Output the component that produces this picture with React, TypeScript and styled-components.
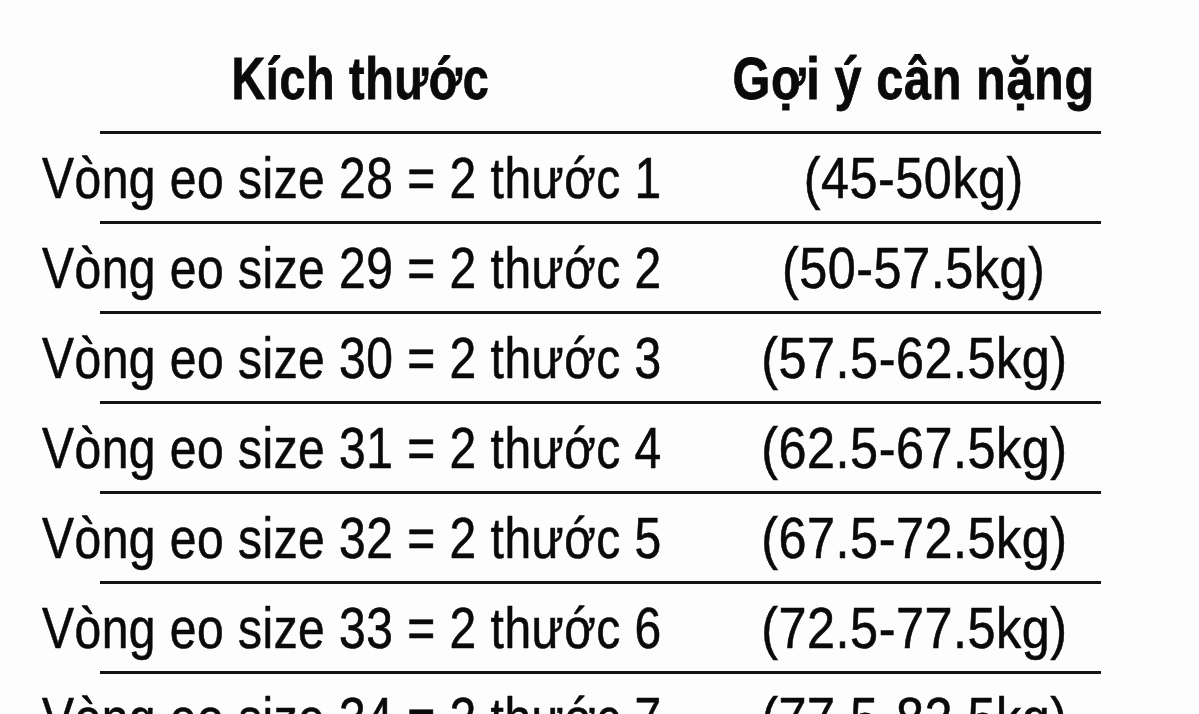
import React from "react";
import styled, { createGlobalStyle } from "styled-components";

const GlobalStyle = createGlobalStyle`
  html, body {
    margin: 0;
    padding: 0;
    background: #fdfdfd;
    overflow: hidden;
  }
  body {
    font-family: "Liberation Sans", Arial, sans-serif;
    color: #0a0a0a;
  }
`;

const Page = styled.div`
  width: 1199px;
  height: 714px;
  overflow: hidden;
  display: flex;
  flex-direction: column;
`;

const Row = styled.div<{ $header?: boolean }>`
  display: grid;
  grid-template-columns: 636px 472px;
  padding-left: 42px;
  height: ${(p) => (p.$header ? "131px" : "87px")};
  box-sizing: border-box;
  padding-top: ${(p) => (p.$header ? "49px" : "0")};
  flex-shrink: 0;
`;

const HeadCell = styled.div`
  font-family: "Liberation Sans", Arial, sans-serif;
  font-weight: 700;
  font-size: 60px;
  line-height: 60px;
  text-align: center;
  white-space: nowrap;
  letter-spacing: 0.8px;
  -webkit-text-stroke: 0.8px #0a0a0a;
`;

const Cell = styled.div<{ $align: "left" | "center" }>`
  font-family: "Liberation Sans", Arial, sans-serif;
  font-size: 58px;
  line-height: 87px;
  text-align: ${(p) => p.$align};
  white-space: nowrap;
  letter-spacing: 0.6px;
  -webkit-text-stroke: 0.6px #0a0a0a;
`;

/* condensed face: the reference uses a Helvetica Condensed look */
const Narrow = styled.span<{ $sx: number; $origin: "left" | "center" }>`
  display: inline-block;
  transform: scaleX(${(p) => p.$sx});
  transform-origin: ${(p) => p.$origin} center;
`;

const Rule = styled.div`
  margin-left: 100px;
  width: 1001px;
  height: 3px;
  background: #141414;
  flex-shrink: 0;
`;

const rows: [string, string][] = [
  ["Vòng eo size 28 = 2 thước 1", "(45-50kg)"],
  ["Vòng eo size 29 = 2 thước 2", "(50-57.5kg)"],
  ["Vòng eo size 30 = 2 thước 3", "(57.5-62.5kg)"],
  ["Vòng eo size 31 = 2 thước 4", "(62.5-67.5kg)"],
  ["Vòng eo size 32 = 2 thước 5", "(67.5-72.5kg)"],
  ["Vòng eo size 33 = 2 thước 6", "(72.5-77.5kg)"],
  ["Vòng eo size 34 = 2 thước 7", "(77.5-82.5kg)"],
];

export default function App() {
  return (
    <>
      <GlobalStyle />
      <Page>
        <Row $header>
          <HeadCell>
            <Narrow $sx={0.78} $origin="center">Kích thước</Narrow>
          </HeadCell>
          <HeadCell>
            <Narrow $sx={0.81} $origin="center">Gợi ý cân nặng</Narrow>
          </HeadCell>
        </Row>
        <Rule />
        {rows.map(([size, weight], i) => (
          <React.Fragment key={i}>
            <Row>
              <Cell $align="left">
                <Narrow $sx={0.827} $origin="left">{size}</Narrow>
              </Cell>
              <Cell $align="center">
                <Narrow $sx={0.868} $origin="center">{weight}</Narrow>
              </Cell>
            </Row>
            <Rule />
          </React.Fragment>
        ))}
      </Page>
    </>
  );
}
